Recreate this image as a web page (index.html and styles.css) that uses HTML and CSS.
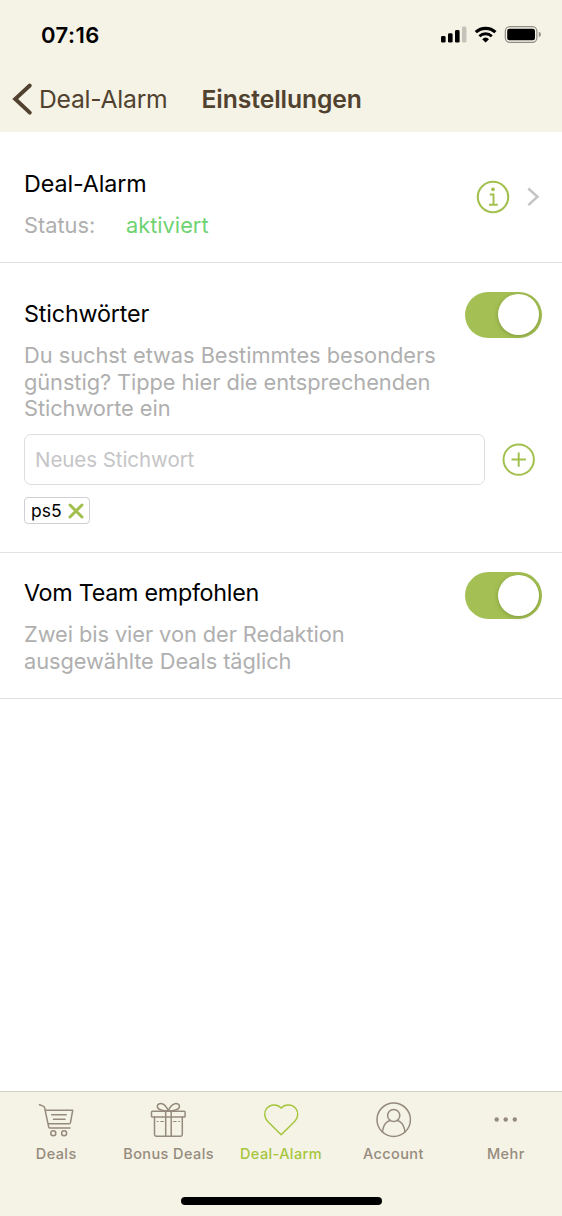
FILE: index.html
```html
<!DOCTYPE html>
<html lang="de">
<head>
<meta charset="utf-8">
<title>Einstellungen</title>
<link rel="stylesheet" href="styles.css">
</head>
<body>
<div class="app">
  <header class="header">
    <div class="status-bar">
      <span class="time">07:16</span>
      <svg class="status-icons" width="102" height="20" viewBox="440 24 102 20">
        <rect x="441" y="36" width="4.6" height="6.6" rx="1.4"/>
        <rect x="448" y="33.3" width="4.6" height="9.3" rx="1.4"/>
        <rect x="455" y="30" width="4.6" height="12.6" rx="1.4"/>
        <rect x="462" y="26.6" width="4.4" height="16" rx="1.4" fill="#c4c2b9"/>
        <path d="M475.8 32.2a14.2 14.2 0 0 1 19.6 0" fill="none" stroke="#000" stroke-width="3.2"/>
        <path d="M479.4 36.2a9.2 9.2 0 0 1 12.4 0" fill="none" stroke="#000" stroke-width="2.9"/>
        <path d="M482.2 39.2a5 5 0 0 1 6.800 0L485.600 42.600z"/>
        <rect x="505.300" y="26.700" width="31.600" height="15.600" rx="4.600" fill="none" stroke="#8e8c84" stroke-width="1.200"/>
        <rect x="507.200" y="28.700" width="27.800" height="11.600" rx="2.200"/>
        <path d="M538.800 31.800q2.200 .8 2.200 2.700t-2.200 2.700z" fill="#8e8c84"/>
      </svg>
    </div>
    <nav class="nav-bar">
      <svg class="back-icon" width="22" height="34" viewBox="11 82 22 34"><path d="M29.800 85.500L15.200 99l14.600 13.700" fill="none" stroke="#50422f" stroke-width="3.900" stroke-linecap="round" stroke-linejoin="miter"/></svg>
      <span class="back-label">Deal-Alarm</span>
      <h1 class="title">Einstellungen</h1>
    </nav>
  </header>

  <main class="content">
    <section class="row row-status">
      <div class="row-text">
        <h2 class="row-title t-alarm">Deal-Alarm</h2>
        <p class="desc status"><span class="status-label">Status:</span><span class="active">aktiviert</span></p>
      </div>
      <svg class="info-icon" width="66" height="36" viewBox="475 179 66 36" fill="none" stroke="#a3c04f">
        <circle cx="493" cy="197" r="15.200" stroke-width="2.100"/>
        <circle cx="493" cy="189.300" r="1.900" fill="#a3c04f" stroke="none"/>
        <path d="M489.800 194.500h3.700v10M489 204.700h8.800" stroke-width="1.900"/>
        <path d="M528.300 188.500l9.200 8.300-9.200 8.300" stroke="#c4c4c4" stroke-width="2.500"/>
      </svg>
    </section>

    <section class="row row-keywords">
      <div class="row-head">
        <h2 class="row-title t-key">Stichwörter</h2>
        <span class="toggle"><span class="knob"></span></span>
      </div>
      <p class="desc d-key"><span class="l1">Du suchst etwas Bestimmtes besonders</span><br><span class="l2">günstig? Tippe hier die entsprechenden</span><br><span class="l3">Stichworte ein</span></p>
      <div class="entry">
        <div class="field">Neues Stichwort</div>
        <svg width="34" height="34" viewBox="0.300 0.400 34 34" fill="none" stroke="#a3c04f" stroke-width="2"><circle cx="17" cy="17" r="15.200"/><path d="M9.800 17h14.400M17 9.800v14.400"/></svg>
      </div>
      <div class="tag"><span>ps5</span><svg width="18" height="18" viewBox="0 0 18 18"><path d="M3 3l12 12M15 3L3 15" stroke="#a3c04f" stroke-width="3" stroke-linecap="round"/></svg></div>
    </section>

    <section class="row row-team">
      <div class="row-head">
        <h2 class="row-title t-team">Vom Team empfohlen</h2>
        <span class="toggle"><span class="knob"></span></span>
      </div>
      <p class="desc d-team"><span class="l4">Zwei bis vier von der Redaktion</span><br><span class="l5">ausgewählte Deals täglich</span></p>
    </section>
  </main>

  <footer class="footer">
    <nav class="tabs">
      <div class="tab">
        <svg width="38" height="38" viewBox="37 1101 38 38"><path d="M39.500 1104.800l3.800 1.300q1 .4 1.300 1.500l4.100 19.500q.3 1 1.300 1h20M45.200 1110.300h27.500l-2.300 12.600q-.2 .9-1.200 .9H48M51.700 1114.800h14.500M53.500 1119.300h11.500"/><circle cx="53.300" cy="1133.300" r="2.500"/><circle cx="64.100" cy="1133.300" r="2.500"/></svg>
        <span class="b1">Deals</span>
      </div>
      <div class="tab">
        <svg width="38" height="38" viewBox="150 1101 38 38"><rect x="151.500" y="1111.200" width="33.600" height="5.800" rx=".8"/><path d="M154.500 1117v17.500q0 1.700 1.700 1.700h24.400q1.700 0 1.700-1.700V1117M165.700 1111.200v25M171.200 1111.200v25M168.300 1111c-4.600 0-11-1.300-11-4.600 0-2.300 2.500-3.100 4.600-2.700 3.500 .8 5.300 4.300 6.400 7.300zM168.300 1111c4.600 0 11.200-1.300 11.200-4.600 0-2.300-2.500-3.100-4.600-2.700-3.500 .8-5.500 4.300-6.600 7.300z"/><path stroke-width="1.200" d="M157.200 1121.500h.8M160.800 1121.500h2.600M173.500 1121.500h2.600M178.800 1121.500h.8"/></svg>
        <span class="b2">Bonus Deals</span>
      </div>
      <div class="tab tab-on">
        <svg width="38" height="38" viewBox="262 1101 38 38"><path d="M281.200 1134.800l-13.400-13.300c-3.600-3.700-4.200-9.300-1.300-12.900 3.700-4.700 11.300-4.700 14.700-.5 3.500-4.200 11-4.200 14.700 .5 2.900 3.600 2.300 9.200-1.300 12.900z"/></svg>
        <span class="b3">Deal-Alarm</span>
      </div>
      <div class="tab">
        <svg width="38" height="38" viewBox="374 1101 38 38"><circle cx="393.700" cy="1119.700" r="16.700"/><circle cx="393.700" cy="1115.500" r="6.100"/><path d="M382.500 1132q.6-7.500 4.800-10.200M404.900 1132q-.6-7.500-4.800-10.200M387.300 1121.800l3-1.400M400.100 1121.800l-3-1.400"/></svg>
        <span class="b4">Account</span>
      </div>
      <div class="tab">
        <svg class="dots" width="38" height="38" viewBox="487 1101 38 38"><circle cx="496.700" cy="1119.500" r="2.200"/><circle cx="505.700" cy="1119.500" r="2.200"/><circle cx="514.800" cy="1119.500" r="2.200"/></svg>
        <span class="b5">Mehr</span>
      </div>
    </nav>
    <div class="home-indicator"></div>
  </footer>
</div>
</body>
</html>
```
FILE: styles.css
```css
* { box-sizing: border-box; }
body, h1, h2, p { margin: 0; }
body { font-family: Inter, "Liberation Sans", sans-serif; background: #fff; }
svg { display: block; flex: none; }
.app { width: 562px; height: 1216px; display: flex; flex-direction: column; overflow: hidden; }

.header { height: 132px; background: #f5f2e6; }
.status-bar { height: 68px; padding: 0 20px 0 41px; display: flex; align-items: center; justify-content: space-between; }
.time { font-size: 22px; font-weight: 600; line-height: 28px; letter-spacing: 0.5px; padding-top: 1px; }
.nav-bar { height: 62px; display: flex; align-items: center; padding-left: 11px; color: #50422f; white-space: nowrap; }
.back-label { width: 168.500px; padding-left: 6px; font-size: 24.700px; letter-spacing: -0.250px; }
.title { font-size: 24.700px; font-weight: 600; letter-spacing: -0.080px; }

.content { flex: 1; }
.row { padding-left: 24px; padding-right: 20.500px; border-bottom: 1px solid #e2e2e3; }
.row-status { height: 131px; padding-top: 37.500px; display: flex; justify-content: space-between; padding-right: 21px; }
.row-keywords { height: 290px; padding-top: 28.500px; }
.row-team { height: 146px; padding-top: 19px; }
.row-title { font-size: 23.300px; font-weight: 400; line-height: 28px; color: #000; white-space: nowrap; }
.t-alarm { letter-spacing: -0.100px; }
.t-key { letter-spacing: -0.150px; }
.t-team { letter-spacing: -0.270px; }
.desc { font-size: 21.800px; line-height: 26.700px; color: #afafaf; white-space: nowrap; }
.l1 { letter-spacing: -0.030px; }
.l2, .l4, .l5 { letter-spacing: -0.070px; }
.l3 { letter-spacing: -0.070px; }
.status { margin-top: 14px; display: flex; }
.status-label { width: 102px; }
.active { color: #6fd373; }
.info-icon { margin-top: 9.500px; }
.row-head { display: flex; justify-content: space-between; height: 47px; }
.row-keywords .row-title { padding-top: 8.500px; }
.row-team .row-title { padding-top: 6.500px; }
.toggle { width: 76.500px; height: 46.500px; border-radius: 24px; background: #a4c054; padding: 2.800px; display: flex; justify-content: flex-end; }
.knob { width: 41px; height: 41px; border-radius: 50%; background: #fff; box-shadow: 0 1px 4px rgba(70, 90, 20, .4); }
.d-key { margin-top: 3.500px; }
.d-team { margin-top: 2.200px; }
.entry { margin-top: 12px; display: flex; align-items: center; gap: 17px; }
.field { width: 461px; height: 51px; border: 1px solid #dedee0; border-radius: 7px; padding-left: 10px; font-size: 20.500px; letter-spacing: -0.060px; line-height: 50px; color: #c5c5c7; }
.tag { margin-top: 12px; width: 66px; height: 27px; border: 1px solid #cfcfd4; border-radius: 4px; display: flex; align-items: center; padding-left: 6px; gap: 5px; font-size: 17.500px; line-height: 24px; }

.footer { height: 125px; background: #f5f2e6; border-top: 1px solid #d5d3ca; }
.tabs { display: grid; grid-template-columns: repeat(5, 1fr); height: 108px; padding-top: 9px; margin-bottom: -3px; color: #958b7d; }
.tab { display: flex; flex-direction: column; align-items: center; font-size: 14.500px; font-weight: 500; letter-spacing: 0.400px; line-height: 20px; gap: 5px; white-space: nowrap; }
.tab svg { fill: none; stroke: currentColor; stroke-width: 1.500; stroke-linejoin: round; stroke-linecap: round; }
.tab .dots { fill: currentColor; stroke: none; }
.tab-on { color: #a5c63d; }
.home-indicator { width: 201px; height: 8px; border-radius: 4px; background: #000; margin: -1.500px auto 0; }
```
